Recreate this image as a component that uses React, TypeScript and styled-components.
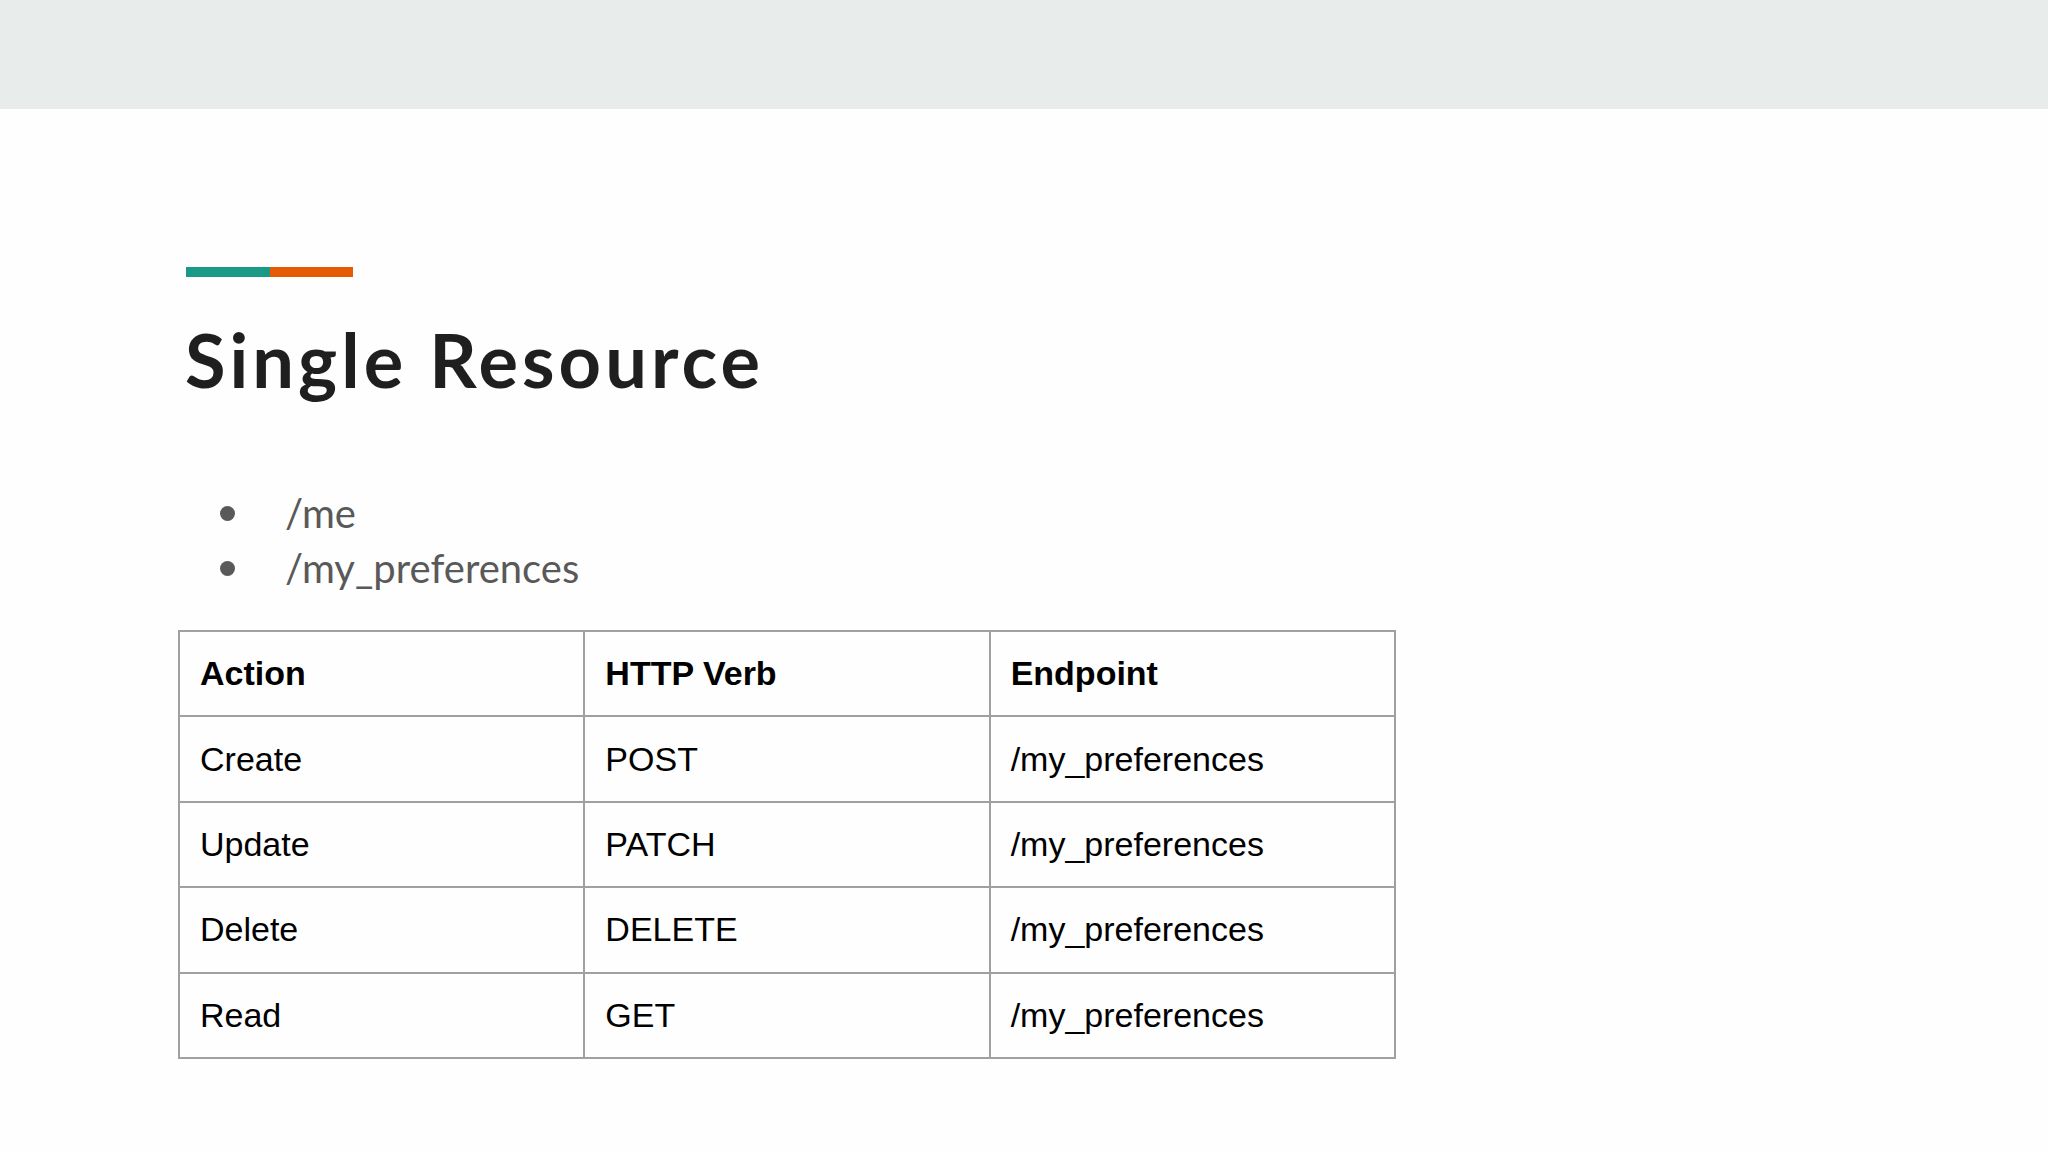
import React from "react";
import styled, { createGlobalStyle } from "styled-components";

const GlobalStyle = createGlobalStyle`
  html, body {
    margin: 0;
    padding: 0;
    background: #fefefe;
  }
  body {
    font-family: "Liberation Sans", Arial, sans-serif;
  }
`;

const Page = styled.div`
  width: 2048px;
  height: 1152px;
  background: #fefefe;
  display: flex;
  flex-direction: column;
  overflow: hidden;
`;

const TopBand = styled.div`
  height: 109px;
  background: #e8edeb;
  flex-shrink: 0;
`;

const Content = styled.main`
  padding: 158px 0 0 186px;
  display: flex;
  flex-direction: column;
`;

const Accent = styled.div`
  display: flex;
  height: 10px;
  width: 167px;
`;

const AccentPart = styled.span<{ $color: string }>`
  flex: 1;
  background: ${(p) => p.$color};
`;

const Title = styled.h1`
  margin: 46px 0 0 -1px;
  font-family: Lato, "Open Sans", sans-serif;
  font-weight: 700;
  font-size: 74px;
  line-height: 1;
  color: #1f1f1f;
  letter-spacing: 4.05px;
`;

const Bullets = styled.ul`
  list-style: none;
  margin: 89px 0 0 0;
  padding: 0;
`;

const Bullet = styled.li`
  display: flex;
  align-items: center;
  font-family: Lato, "Open Sans", sans-serif;
  font-size: 40px;
  line-height: 55px;
  color: #595959;

  &::before {
    content: "";
    width: 15px;
    height: 15px;
    border-radius: 50%;
    background: #595959;
    margin: 0 50px 0 34px;
    flex-shrink: 0;
  }
`;

const Table = styled.table`
  margin: 34px 0 0 -8px;
  border-collapse: collapse;
  width: 1218px;
  table-layout: fixed;
  font-family: "Liberation Sans", Arial, sans-serif;
  font-size: 34px;
  color: #000;
`;

const Cell = styled.td<{ $head?: boolean }>`
  border: 2px solid #a0a0a0;
  height: 85.4px;
  box-sizing: border-box;
  padding: 0 0 0 20px;
  font-weight: ${(p) => (p.$head ? 700 : 400)};
  vertical-align: middle;
  text-align: left;
`;

const rows: [string, string, string][] = [
  ["Create", "POST", "/my_preferences"],
  ["Update", "PATCH", "/my_preferences"],
  ["Delete", "DELETE", "/my_preferences"],
  ["Read", "GET", "/my_preferences"],
];

export default function App() {
  return (
    <>
      <GlobalStyle />
      <Page>
        <TopBand />
        <Content>
          <Accent>
            <AccentPart $color="#1a9a86" />
            <AccentPart $color="#e55a05" />
          </Accent>
          <Title>Single Resource</Title>
          <Bullets>
            <Bullet>/me</Bullet>
            <Bullet>/my_preferences</Bullet>
          </Bullets>
          <Table>
            <tbody>
              <tr>
                <Cell $head>Action</Cell>
                <Cell $head>HTTP Verb</Cell>
                <Cell $head>Endpoint</Cell>
              </tr>
              {rows.map((r) => (
                <tr key={r[0]}>
                  <Cell>{r[0]}</Cell>
                  <Cell>{r[1]}</Cell>
                  <Cell>{r[2]}</Cell>
                </tr>
              ))}
            </tbody>
          </Table>
        </Content>
      </Page>
    </>
  );
}
